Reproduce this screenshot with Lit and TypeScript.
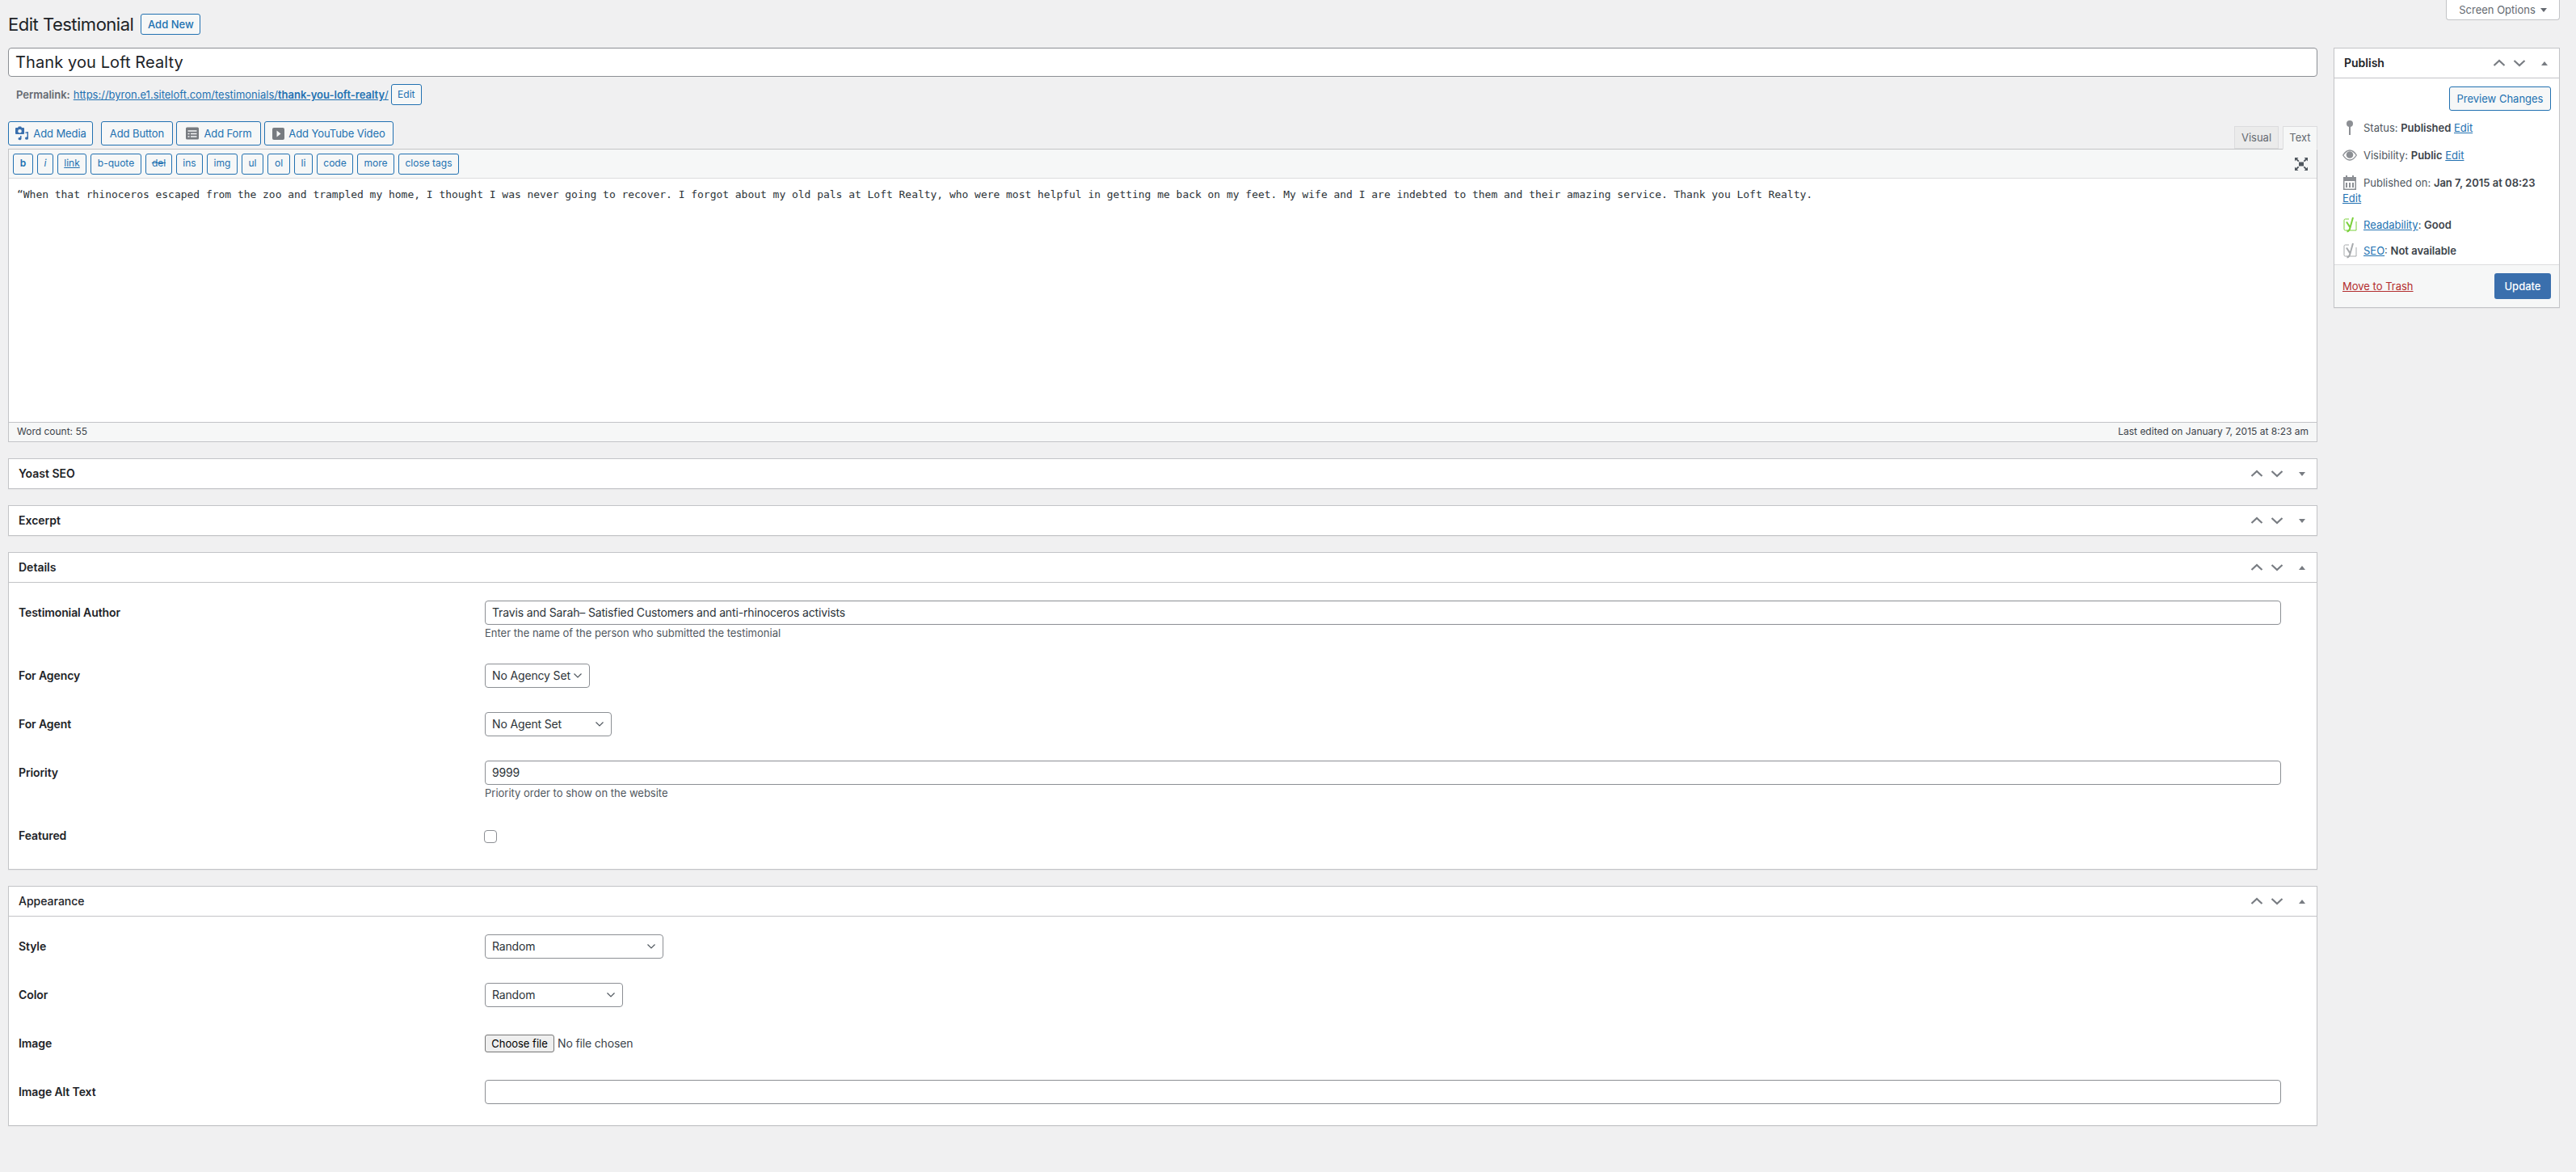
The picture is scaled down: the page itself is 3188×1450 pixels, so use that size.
import { LitElement, html, css, svg } from "lit";
import { customElement } from "lit/decorators.js";

const up = svg`<path d="M2.500 12 L9 6 L15.500 12" fill="none" stroke="currentColor" stroke-width="2.200"/>`;
const down = svg`<path d="M2.500 6 L9 12 L15.500 6" fill="none" stroke="currentColor" stroke-width="2.200"/>`;
const yoastPaths = svg`<path d="M8 3H3.500A1.500 1.500 0 0 0 2 4.500v11A1.500 1.500 0 0 0 3.500 17H17V6" stroke-width="1"/><path d="M5 6.500l4.500 7L13 1M9.500 13.500C9 16 8 18 5.500 18.500" stroke-width="2"/>`;

@customElement("app-root")
export class AppRoot extends LitElement {
  static styles = css`
    :host { display: block; width: 3188px; height: 1450px; background: #f0f0f1; color: #1d2327; font: 13px/1.4 Inter, "Liberation Sans", sans-serif; overflow: hidden; }
    * { box-sizing: border-box; }
    a { color: #2271b1; }
    .top { display: flex; align-items: flex-start; padding: 0 20px 0 10px; height: 59px; }
    h1 { margin: 17px 0 0; font-size: 22px; font-weight: 400; line-height: 26px; letter-spacing: -0.5px; }
    .btn { display: inline-flex; align-items: center; justify-content: center; border: 1px solid #2271b1; border-radius: 3px; background: #f6f7f7; color: #2271b1; white-space: nowrap; }
    .addnew { margin: 17px 0 0 9px; width: 74px; height: 26px; font-size: 13px; font-weight: 500; }
    .screen { margin-left: auto; width: 141px; height: 25px; background: #fff; border: 1px solid #c3c4c7; border-top: 0; border-radius: 0 0 4px 4px; color: #646970; display: flex; align-items: center; justify-content: center; gap: 6px; }
    .screen i, .tri-d { width: 0; height: 0; border: 4.500px solid transparent; border-top: 5px solid #646970; border-bottom: 0; }
    .cols { display: flex; align-items: flex-start; gap: 20px; padding: 0 20px 0 10px; }
    .main { width: 2858px; }
    .side { width: 280px; }
    .title { height: 36px; background: #fff; border: 1px solid #8c8f94; border-radius: 4px; padding: 0 8px; display: flex; align-items: center; font-size: 20px; letter-spacing: 0.1px; }
    .perma { display: flex; align-items: center; height: 26px; margin-top: 9px; padding-left: 10px; color: #646970; gap: 4px; }
    .perma b { font-weight: 600; }
    .perma .btn { width: 38px; height: 26px; font-size: 12px; margin-left: -1px; }
    .tabsrow { display: flex; align-items: flex-end; margin-top: 20px; height: 34px; }
    .mbtns { display: flex; gap: 4px; align-self: flex-start; }
    .mbtns .btn { height: 30px; gap: 5px; font-size: 13px; letter-spacing: -0.1px; }
    .tabs { margin-left: auto; display: flex; gap: 5px; }
    .tab { height: 28px; border: 1px solid #dcdcde; background: #ebebeb; color: #646970; display: flex; align-items: center; justify-content: center; }
    .tab.on { background: #f6f7f7; border-bottom-color: #f6f7f7; margin-bottom: -1px; height: 29px; position: relative; }
    .editor { background: #fff; border: 1px solid #c3c4c7; border-top: 0; }
    .toolbar { height: 37px; display: flex; align-items: center; background: #f6f7f7; border-top: 1px solid #c3c4c7; border-bottom: 1px solid #dcdcde; padding-left: 5px; gap: 5px; }
    .toolbar .btn { height: 26px; font-size: 12px; }
    .toolbar .fs { margin-left: auto; margin-right: 10px; display: flex; color: #50575e; }
    .area { height: 301px; padding: 10px; font: 13px/20px "DejaVu Sans Mono", monospace; letter-spacing: -0.03px; color: #2c3338; }
    .foot { height: 24px; background: #f6f7f7; border-top: 1px solid #c3c4c7; display: flex; align-items: center; justify-content: space-between; padding: 0 10px; font-size: 12px; color: #3c434a; }
    .box { background: #fff; border: 1px solid #c3c4c7; margin-top: 20px; box-shadow: 0 1px 1px rgba(0,0,0,.04); }
    .hdr { height: 36px; display: flex; align-items: center; padding-left: 12px; font-weight: 600; font-size: 14px; }
    .hdr.plain { font-weight: 500; }
    .open > .hdr { border-bottom: 1px solid #c3c4c7; height: 37px; }
    .ctrl { margin-left: auto; display: flex; align-items: center; color: #787c82; gap: 7px; padding-right: 9px; }
    .ctrl svg { display: block; width: 18px; height: 18px; }
    .ctrl .t { width: 18px; margin-left: 6px; display: flex; justify-content: center; }
    .tri-d { border-top-color: #787c82; }
    .tri-u { width: 0; height: 0; border: 4.500px solid transparent; border-bottom: 5px solid #787c82; border-top: 0; }
    .fields { padding: 22px 44px 0 12px; }
    .fieldrow { display: grid; grid-template-columns: 577px 1fr; }
    .fieldrow label { font-weight: 600; font-size: 14px; letter-spacing: -0.1px; line-height: 30px; color: #1d2327; }
    .input { height: 30px; background: #fff; border: 1px solid #8c8f94; border-radius: 4px; padding: 0 8px; display: flex; align-items: center; color: #2c3338; font-size: 14px; letter-spacing: -0.15px; }
    .select { justify-content: space-between; }
    .select svg { flex: none; }
    .desc { font-size: 13px; line-height: 17px; color: #50575e; margin-top: 2px; }
    .check { width: 16px; height: 16px; border: 1px solid #8c8f94; border-radius: 4px; background: #fff; margin: 8px 0 0 -1px; }
    .file { display: flex; align-items: center; gap: 4px; height: 30px; font-size: 14px; letter-spacing: -0.15px; color: #3c434a; }
    .file span { display: flex; align-items: center; justify-content: center; width: 86px; height: 22px; background: #efefef; border: 1px solid #767676; border-radius: 3px; font-size: 13px; letter-spacing: 0; color: #000; }
    .side .box { margin-top: 0; }
    .pubbody { height: 230px; padding: 10px 10px 0; }
    .preview { display: flex; justify-content: flex-end; }
    .preview .btn { width: 126px; height: 30px; }
    .mrow { display: flex; align-items: center; gap: 6px; color: #50575e; height: 20px; }
    .mrow svg { flex: none; display: block; }
    .mrow b { font-weight: 600; color: #3c434a; }
    .m1 { margin-top: 11px; }
    .m2 { margin-top: 14px; }
    .m4 { display: block; height: 20px; }
    .m5 { margin-top: 12px; }
    .pubfoot { height: 53px; background: #f6f7f7; border-top: 1px solid #dcdcde; display: flex; align-items: center; justify-content: space-between; padding: 0 10px; }
    .pubfoot a { color: #b32d2e; }
    .update { width: 70px; height: 32px; background: #3a6fad; border-radius: 3px; color: #fff; display: flex; align-items: center; justify-content: center; font-weight: 500; }
    .wm { width: 105px; margin-right: 6px; }
    .wb { width: 89px; }
    .wf { width: 105px; }
    .wy { width: 160px; }
    .tv { width: 55px; }
    .tt { width: 43px; }
    .t-del { text-decoration: line-through; }
    .t-link { text-decoration: underline; }
    .t-i { font-style: italic; }
    .t-b { font-weight: 600; }
    .w130 { width: 130px; } .w157 { width: 157px; } .w221 { width: 221px; } .w171 { width: 171px; }
    .pb26 { padding-bottom: 26px; }
  `;

  private ctrl(open: boolean) {
    return html`<div class="ctrl"><svg viewBox="0 0 18 18">${up}</svg><svg viewBox="0 0 18 18">${down}</svg><span class="t"><span class=${open ? "tri-u" : "tri-d"}></span></span></div>`;
  }
  private chev() {
    return html`<svg width="12" height="8" viewBox="0 0 12 8"><path d="M1.500 1.500 L6 6 L10.500 1.500" fill="none" stroke="#50575e" stroke-width="1.200"/></svg>`;
  }
  private row(label: string, body: unknown, top: number) {
    return html`<div class="fieldrow" style="margin-top:${top}px"><label>${label}</label><div>${body}</div></div>`;
  }

  render() {
    const tags: [string, number][] = [["b",25],["i",20],["link",36],["b-quote",63],["del",33],["ins",33],["img",38],["ul",27],["ol",28],["li",23],["code",45],["more",46],["close tags",75]];
    return html`
      <div class="top">
        <h1>Edit Testimonial</h1>
        <span class="btn addnew">Add New</span>
        <div class="screen">Screen Options <i></i></div>
      </div>
      <div class="cols">
        <div class="main">
          <div class="title">Thank you Loft Realty</div>
          <div class="perma"><b>Permalink:</b> <a href="#">https://byron.e1.siteloft.com/testimonials/<b>thank-you-loft-realty</b>/</a><span class="btn">Edit</span></div>
          <div class="tabsrow">
            <div class="mbtns">
              <span class="btn wm"><svg width="18" height="20" viewBox="0 0 18 20" fill="#3a6fad"><path d="M2 3h2l1-1.500h3l1 1.500h2a1 1 0 0 1 1 1v6a1 1 0 0 1-1 1H2a1 1 0 0 1-1-1V4a1 1 0 0 1 1-1zm4.500 2a2.300 2.300 0 1 0 0 4.600 2.300 2.300 0 0 0 0-4.600zM17 8v8.200a2 1.700 0 1 1-1.500-1.700V9.500l-2 .5V8.500zM8.500 13v3.700a2 1.700 0 1 1-1.500-1.700V13z"/></svg>Add Media</span>
              <span class="btn wb">Add Button</span>
              <span class="btn wf"><svg width="18" height="20" viewBox="0 0 18 20"><rect x="1" y="2.500" width="16" height="15" rx="1.500" fill="#777b80"/><path d="M3.500 7h11M3.500 10.500h2M7 10.500h7.500M3.500 14h2M7 14h7.500" stroke="#f6f7f7" stroke-width="1.400"/></svg>Add Form</span>
              <span class="btn wy"><svg width="15" height="15" viewBox="0 0 15 15"><rect width="15" height="15" rx="2" fill="#777b80"/><path d="M5.500 3.500l5 4-5 4z" fill="#f6f7f7"/></svg><span>Add YouTube Video</span></span>
            </div>
            <div class="tabs"><div class="tab tv">Visual</div><div class="tab on tt">Text</div></div>
          </div>
          <div class="editor">
            <div class="toolbar">
              ${tags.map(([t, w]) => html`<span class="btn t-${t}" style="width:${w}px">${t}</span>`)}
              <span class="fs"><svg width="18" height="18" viewBox="0 0 18 18" fill="currentColor"><rect x="6" y="6.500" width="6" height="5"/><path d="M1 1h4.500L4 2.500 6.500 5 5.200 6.300 2.500 3.800 1 5.500zM17 1v4.500L15.500 4 13 6.300 11.700 5l2.500-2.500L12.500 1zM1 17v-4.500L2.500 14 5 11.700 6.300 13l-2.500 2.500L5.500 17zM17 17h-4.500l1.700-1.500-2.500-2.500 1.300-1.300 2.500 2.500 1.500-1.700z"/></svg></span>
            </div>
            <div class="area">“When that rhinoceros escaped from the zoo and trampled my home, I thought I was never going to recover. I forgot about my old pals at Loft Realty, who were most helpful in getting me back on my feet. My wife and I are indebted to them and their amazing service. Thank you Loft Realty.</div>
            <div class="foot"><span>Word count: 55</span><span>Last edited on January 7, 2015 at 8:23 am</span></div>
          </div>
          <div class="box"><div class="hdr">Yoast SEO${this.ctrl(false)}</div></div>
          <div class="box"><div class="hdr">Excerpt${this.ctrl(false)}</div></div>
          <div class="box open">
            <div class="hdr">Details${this.ctrl(true)}</div>
            <div class="fields pb26">
              ${this.row("Testimonial Author", html`<div class="input">Travis and Sarah– Satisfied Customers and anti-rhinoceros activists</div><div class="desc">Enter the name of the person who submitted the testimonial</div>`, 0)}
              ${this.row("For Agency", html`<div class="input select w130">No Agency Set ${this.chev()}</div>`, 29)}
              ${this.row("For Agent", html`<div class="input select w157">No Agent Set ${this.chev()}</div>`, 30)}
              ${this.row("Priority", html`<div class="input">9999</div><div class="desc">Priority order to show on the website</div>`, 30)}
              ${this.row("Featured", html`<div class="check"></div>`, 29)}
            </div>
          </div>
          <div class="box open">
            <div class="hdr plain">Appearance${this.ctrl(true)}</div>
            <div class="fields pb26">
              ${this.row("Style", html`<div class="input select w221">Random ${this.chev()}</div>`, 0)}
              ${this.row("Color", html`<div class="input select w171">Random ${this.chev()}</div>`, 30)}
              ${this.row("Image", html`<div class="file"><span>Choose file</span>No file chosen</div>`, 30)}
              ${this.row("Image Alt Text", html`<div class="input"></div>`, 30)}
            </div>
          </div>
        </div>
        <div class="side">
          <div class="box open">
            <div class="hdr">Publish${this.ctrl(true)}</div>
            <div class="pubbody">
              <div class="preview"><span class="btn">Preview Changes</span></div>
              <div class="mrow m1"><svg width="20" height="20" viewBox="0 0 20 20" fill="#8c8f94"><circle cx="9" cy="5" r="4"/><rect x="8" y="7" width="2" height="12"/></svg><span>Status: <b>Published</b> <a href="#">Edit</a></span></div>
              <div class="mrow m2"><svg width="20" height="20" viewBox="0 0 20 20"><path d="M.7 10c2.500-4 5.300-6 8.300-6s5.800 2 8.300 6c-2.500 4-5.300 6-8.300 6S3.200 14 .7 10z" fill="none" stroke="#8c8f94" stroke-width="1.300"/><circle cx="9" cy="9.500" r="4.300" fill="#8c8f94"/></svg><span>Visibility: <b>Public</b> <a href="#">Edit</a></span></div>
              <div class="mrow m2"><svg width="20" height="20" viewBox="0 0 20 20" fill="#8c8f94"><path d="M1 3h3V1h2v2h6V1h2v2h3v16H1zm1.500 5v9.500h13V8z"/><rect x="4" y="10" width="2" height="6"/><rect x="8" y="10" width="2" height="6"/><rect x="12" y="10" width="2" height="6"/></svg><span>Published on: <b>Jan 7, 2015 at 08:23</b></span></div>
              <div class="m4"><a href="#">Edit</a></div>
              <div class="mrow m5"><svg width="20" height="20" viewBox="0 0 20 20" fill="none" stroke="#7ad03a">${yoastPaths}</svg><span><a href="#">Readability</a>: <b>Good</b></span></div>
              <div class="mrow m5"><svg width="20" height="20" viewBox="0 0 20 20" fill="none" stroke="#a7aaad">${yoastPaths}</svg><span><a href="#">SEO</a>: <b>Not available</b></span></div>
            </div>
            <div class="pubfoot"><a href="#">Move to Trash</a><span class="update">Update</span></div>
          </div>
        </div>
      </div>
    `;
  }
}
